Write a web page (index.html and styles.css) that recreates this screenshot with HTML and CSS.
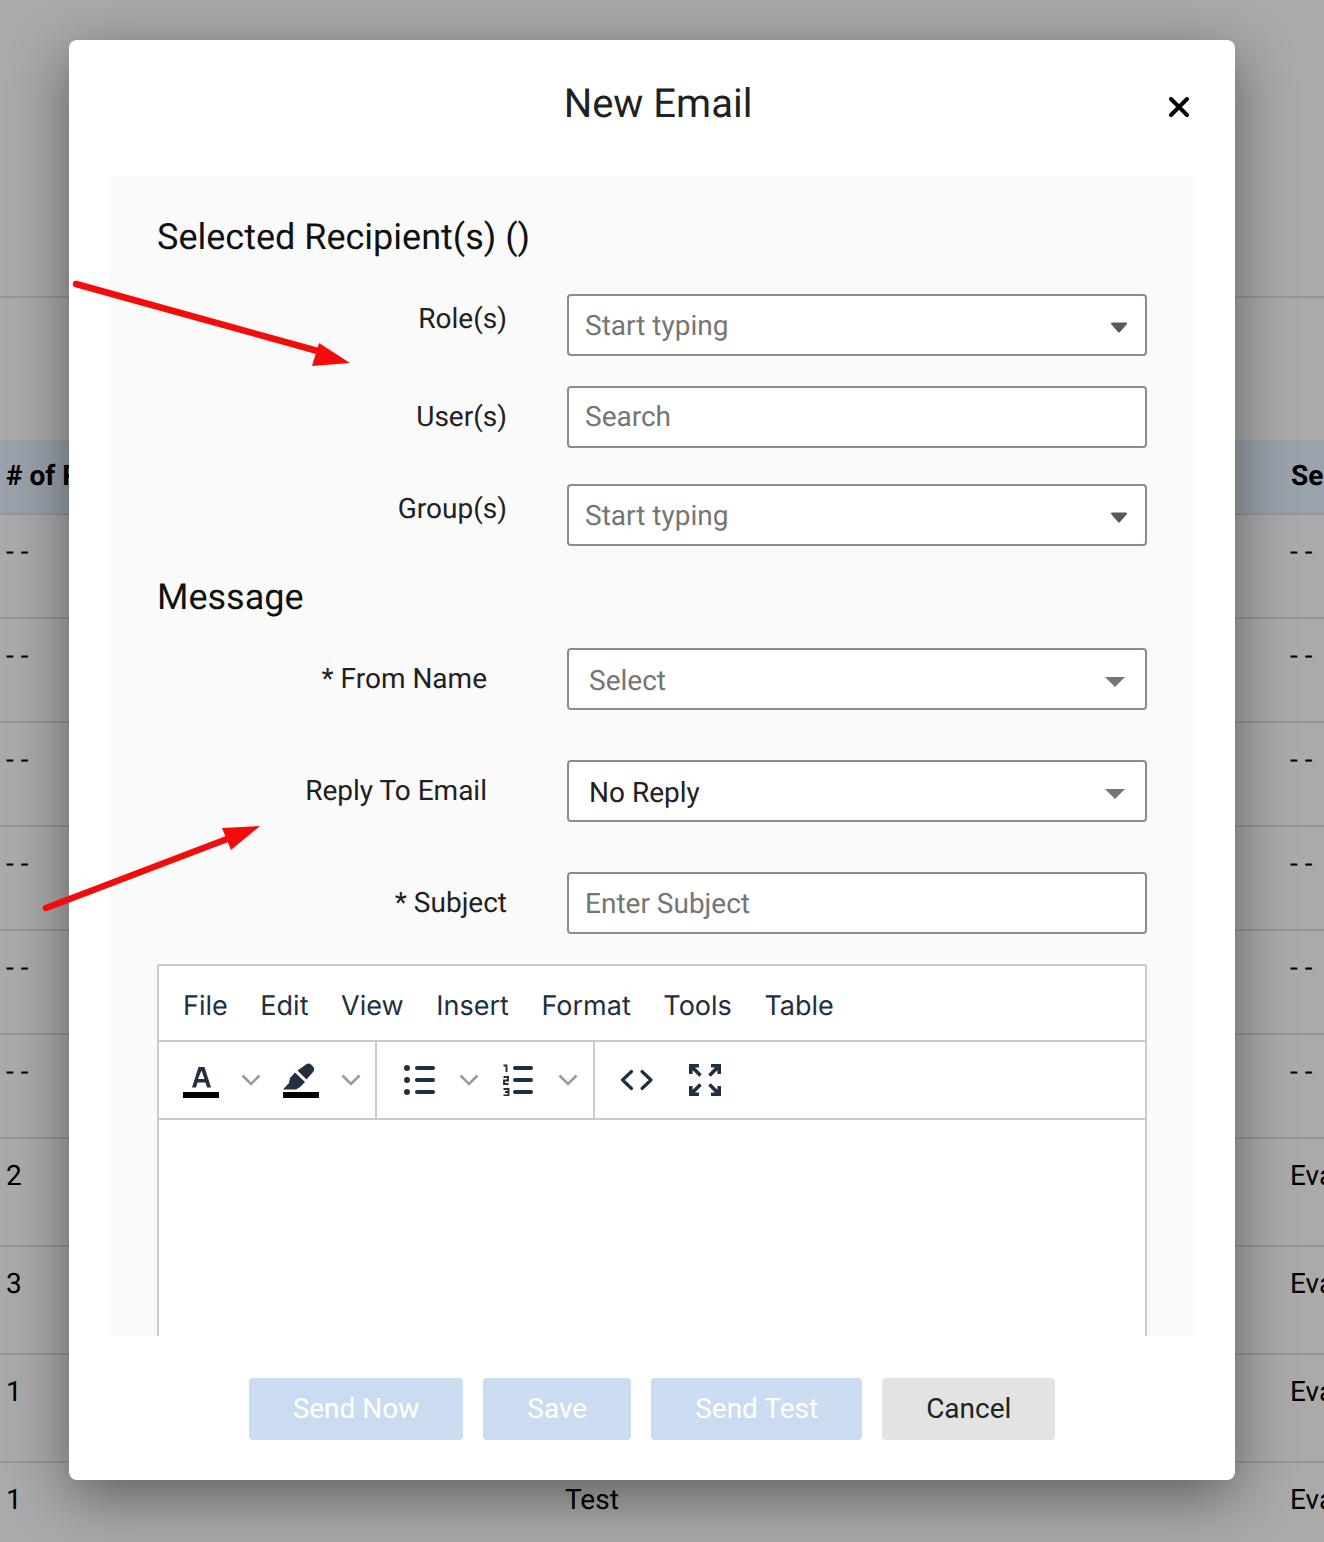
FILE: index.html
```html
<!DOCTYPE html>
<html lang="en">
<head>
<meta charset="utf-8">
<title>New Email</title>
<link rel="stylesheet" href="styles.css">
</head>
<body>
<main class="backdrop">
  <div class="bg-top"></div>
  <div class="bg-gap"></div>
  <div class="bg-row bg-head"><span class="c1"># of Recipients</span><span class="c2"></span><span class="c3">Sent By</span></div>
  <div class="bg-row"><span class="c1">- -</span><span class="c2"></span><span class="c3">- -</span></div>
  <div class="bg-row"><span class="c1">- -</span><span class="c2"></span><span class="c3">- -</span></div>
  <div class="bg-row"><span class="c1">- -</span><span class="c2"></span><span class="c3">- -</span></div>
  <div class="bg-row"><span class="c1">- -</span><span class="c2"></span><span class="c3">- -</span></div>
  <div class="bg-row"><span class="c1">- -</span><span class="c2"></span><span class="c3">- -</span></div>
  <div class="bg-row"><span class="c1">- -</span><span class="c2"></span><span class="c3">- -</span></div>
  <div class="bg-row tall"><span class="c1">2</span><span class="c2"></span><span class="c3">Evan</span></div>
  <div class="bg-row tall"><span class="c1">3</span><span class="c2"></span><span class="c3">Evan</span></div>
  <div class="bg-row tall"><span class="c1">1</span><span class="c2"></span><span class="c3">Evan</span></div>
  <div class="bg-row tall"><span class="c1">1</span><span class="c2">Test</span><span class="c3">Evan</span></div>
</main>

<section class="modal" aria-label="New Email">
  <header class="modal-head">
    <h1>New Email</h1>
    <button class="close" aria-label="Close">
      <svg viewBox="0 0 20 20" width="20" height="20"><path d="M2 2 18 18M18 2 2 18" fill="none" stroke="#000" stroke-width="4" stroke-linecap="round"/></svg>
    </button>
  </header>

  <div class="panel">
    <h2 class="h-recipients">Selected Recipient(s) ()</h2>

    <div class="row r-role">
      <label>Role(s)</label>
      <div class="field ph">Start typing<svg class="caret-small" width="18" height="11" viewBox="0 0 18 11"><path d="M2 1.500H16L9 9.500Z" fill="#595959" stroke="#595959" stroke-width="2" stroke-linejoin="round"/></svg></div>
    </div>
    <div class="row r-user">
      <label class="lbl-mid">User(s)</label>
      <div class="field ph search">Search</div>
    </div>
    <div class="row r-group">
      <label>Group(s)</label>
      <div class="field ph">Start typing<svg class="caret-small" width="18" height="11" viewBox="0 0 18 11"><path d="M2 1.500H16L9 9.500Z" fill="#595959" stroke="#595959" stroke-width="2" stroke-linejoin="round"/></svg></div>
    </div>

    <h2 class="h-message">Message</h2>

    <div class="row r-from">
      <label class="inset">* From Name</label>
      <div class="field ph wide">Select<i class="caret"></i></div>
    </div>
    <div class="row r-reply">
      <label class="inset">Reply To Email</label>
      <div class="field wide dark">No Reply<i class="caret"></i></div>
    </div>
    <div class="row r-subject">
      <label class="lbl-mid">* Subject</label>
      <div class="field ph">Enter Subject</div>
    </div>

    <div class="editor">
      <nav class="menubar">
        <span>File</span><span>Edit</span><span>View</span><span>Insert</span><span>Format</span><span>Tools</span><span>Table</span>
      </nav>
      <div class="toolbar">
        <div class="group g1">
          <svg class="ico" width="36" height="36" viewBox="0 0 36 36"><path d="M9 25.500 15.500 5h6L28 25.500h-4l-1.500-5h-8l-1.500 5Zm6-8.500h6.500L18.500 8.500Z" fill="#222f3e" fill-rule="evenodd"/><rect y="30" width="36" height="6" fill="#000"/></svg>
          <svg class="chev" width="20" height="12" viewBox="0 0 20 12"><path d="M1.500 1.500 10 10l8.500-8.500" fill="none" stroke="#959ba2" stroke-width="2.600"/></svg>
          <svg class="ico" width="36" height="36" viewBox="0 0 36 36"><g fill="#222f3e"><path d="M0 27.500 6 21l1-5 5-5.500L22 20l-5 5-4 2.500Z"/><path d="M14.500 8.500 23.500 17.500 30 10c1.500-1.500 1.500-4 0-5.500l-2-2c-1.500-1.500-3.500-1.500-5 0Z"/></g><rect y="30" width="36" height="6" fill="#000"/></svg>
          <svg class="chev" width="20" height="12" viewBox="0 0 20 12"><path d="M1.500 1.500 10 10l8.500-8.500" fill="none" stroke="#959ba2" stroke-width="2.600"/></svg>
        </div>
        <div class="group g2">
          <svg class="ico" width="32" height="32" viewBox="0 0 32 32"><g fill="#222f3e"><circle cx="3" cy="4" r="3"/><circle cx="3" cy="16" r="3"/><circle cx="3" cy="28" r="3"/><rect x="11" y="2" width="20" height="4" rx="2"/><rect x="11" y="14" width="20" height="4" rx="2"/><rect x="11" y="26" width="20" height="4" rx="2"/></g></svg>
          <svg class="chev" width="20" height="12" viewBox="0 0 20 12"><path d="M1.500 1.500 10 10l8.500-8.500" fill="none" stroke="#959ba2" stroke-width="2.600"/></svg>
          <svg class="ico" width="32" height="32" viewBox="0 0 32 32"><g fill="#222f3e"><rect x="10" y="2" width="20" height="4" rx="2"/><rect x="10" y="14" width="20" height="4" rx="2"/><rect x="10" y="26" width="20" height="4" rx="2"/></g><g fill="none" stroke="#222f3e" stroke-width="1.900"><path d="M.5 1.500H3.500V8"/><path d="M.5 13h4.500v3.500H1V20h4.500"/><path d="M.5 25h5v3H2M5.500 28v3.500H.5"/></g></svg>
          <svg class="chev" width="20" height="12" viewBox="0 0 20 12"><path d="M1.500 1.500 10 10l8.500-8.500" fill="none" stroke="#959ba2" stroke-width="2.600"/></svg>
        </div>
        <div class="group g3">
          <svg class="ico" width="34" height="22" viewBox="0 0 34 22"><path d="M11.500 2.500 2.500 11l9 8.500M22 2.500l9 8.500-9 8.500" fill="none" stroke="#222f3e" stroke-width="3.200" stroke-linecap="round" stroke-linejoin="round"/></svg>
          <svg class="ico" width="32" height="32" viewBox="0 0 32 32"><g fill="none" stroke="#222f3e" stroke-width="3.600"><path d="M1.800 10V1.800H10M2.500 2.500 11.500 11.500"/><path d="M30.200 10V1.800H22M29.500 2.500 20.500 11.500"/><path d="M1.800 22v8.200H10M2.500 29.500 11.500 20.500"/><path d="M30.200 22v8.200H22M29.500 29.500 20.500 20.500"/></g></svg>
        </div>
      </div>
      <div class="edit-area"></div>
    </div>
  </div>

  <footer class="modal-foot">
    <button class="btn primary w-now">Send Now</button>
    <button class="btn primary w-save">Save</button>
    <button class="btn primary w-test">Send Test</button>
    <button class="btn cancel">Cancel</button>
  </footer>
</section>

<svg class="arrows" width="1324" height="1542" viewBox="0 0 1324 1542" aria-hidden="true">
  <path d="M76 284 325 353" stroke="#f40b0b" stroke-width="6.500" stroke-linecap="round" fill="none"/>
  <path d="M350 363 319 343 312 366Z" fill="#f40b0b"/>
  <path d="M46 908 235 836" stroke="#f40b0b" stroke-width="6.500" stroke-linecap="round" fill="none"/>
  <path d="M260 826 222 828 231 850Z" fill="#f40b0b"/>
</svg>
</body>
</html>
```
FILE: styles.css
```css
* { box-sizing: border-box; }
html, body { margin: 0; padding: 0; }
body {
  width: 1324px;
  height: 1542px;
  overflow: hidden;
  position: relative;
  background: #aaaaaa;
  font-family: Roboto, "Liberation Sans", sans-serif;
  text-rendering: geometricPrecision;
  color: #000;
}

/* dimmed table behind the modal */
.backdrop { height: 1542px; overflow: hidden; }
.bg-top { height: 298px; border-bottom: 2px solid #969696; }
.bg-gap { height: 142px; }
.bg-row {
  height: 104px;
  border-bottom: 2px solid #969696;
  display: grid;
  grid-template-columns: 559px 725px 1fr;
  padding-left: 6px;
  font-size: 28px;
  line-height: 32px;
  padding-top: 21px;
  color: #000;
  white-space: nowrap;
  overflow: hidden;
}
.bg-row.tall { height: 108px; padding-top: 21px; }
.bg-head {
  height: 75px;
  background: #9aa2ab;
  font-weight: 700;
  padding-top: 20px;
}
.bg-head .c3 { padding-left: 1px; }
.c1 { display: block; }

/* modal */
.modal {
  position: absolute;
  left: 69px;
  top: 40px;
  width: 1166px;
  height: 1440px;
  background: #fff;
  border-radius: 8px;
  box-shadow: 0 16px 60px rgba(0, 0, 0, .45);
  display: flex;
  flex-direction: column;
}
.modal-head {
  height: 136px;
  position: relative;
  text-align: center;
}
.modal-head h1 {
  margin: 0;
  padding: 39px 0 0 12px;
  font-size: 40px;
  line-height: 50px;
  font-weight: 400;
  color: #212121;
}
.close {
  position: absolute;
  left: 1098px;
  top: 55px;
  width: 24px;
  height: 24px;
  padding: 2px;
  border: 0;
  background: none;
  display: flex;
}
.panel {
  margin: 0 40px;
  height: 1160px;
  background: #fafafa;
  overflow: hidden;
  padding: 0 48px;
}
h2 {
  margin: 0;
  font-size: 36px;
  line-height: 44px;
  font-weight: 400;
  color: #111;
}
.h-recipients { margin-top: 39px; }
.h-message { margin-top: 29px; }

.row {
  display: flex;
  gap: 60px;
  margin-top: 30px;
}
.row label {
  width: 350px;
  text-align: right;
  font-size: 28px;
  line-height: 32px;
  padding-top: 9px;
  color: #212121;
}
.row label.lbl-mid { padding-top: 15px; }
.row label.inset { padding-right: 20px; padding-top: 15px; }

.r-role { margin-top: 35px; }
.r-group { margin-top: 36px; }
.r-from { margin-top: 29px; }
.r-reply { margin-top: 50px; }
.r-subject { margin-top: 50px; }

.field {
  width: 580px;
  height: 62px;
  background: #fff;
  border: 2px solid #8c8c8c;
  border-radius: 4px;
  padding: 0 16px;
  font-size: 28px;
  line-height: 60px;
  position: relative;
}
.field.search { line-height: 58px; }
.field.wide { padding-left: 20px; line-height: 62px; }
.ph { color: #757575; }
.dark { color: #212121; }
.caret {
  position: absolute;
  right: 20px;
  top: 27px;
  width: 0;
  height: 0;
  border: 10px solid transparent;
  border-top: 10px solid #757575;
  border-bottom: 0;
}
.caret-small {
  position: absolute;
  right: 17px;
  top: 26px;
  display: block;
}

/* editor */
.editor {
  margin-top: 30px;
  width: 990px;
  height: 400px;
  border: 2px solid #cccccc;
  border-bottom: 0;
  border-radius: 2px 2px 0 0;
  background: #fff;
}
.menubar {
  height: 76px;
  border-bottom: 2px solid #cccccc;
  display: flex;
  align-items: center;
  gap: 32.6px;
  padding: 4px 0 0 24px;
  font-family: Inter, Roboto, sans-serif;
  font-size: 27px;
  color: #222f3e;
}
.toolbar {
  height: 78px;
  border-bottom: 2px solid #cccccc;
  display: flex;
}
.group {
  display: flex;
  align-items: center;
  height: 76px;
  border-right: 2px solid #cccccc;
}
.g1 { width: 218px; padding-left: 24px; }
.g2 { width: 218px; padding-left: 27px; }
.g3 { border-right: 0; padding-left: 25px; gap: 35px; }
.chev { margin: 0 0 0 22px; flex: none; }
.g1 .chev + .ico { margin-left: 22px; }
.g2 .chev + .ico { margin-left: 24px; }
.g2 .chev { margin-left: 23px; }
.ico { flex: none; display: block; }

/* footer */
.modal-foot {
  flex: 1;
  display: flex;
  justify-content: center;
  gap: 20px;
  padding-top: 42px;
}
.btn {
  height: 62px;
  border: 0;
  border-radius: 4px;
  font-family: inherit;
  font-size: 28px;
  padding: 0 44px 2px;
}
.primary { background: #cbdcf1; color: #fff; }
.cancel { background: #e3e3e3; color: #212121; }

/* annotation arrows over the screenshot */
.arrows {
  position: absolute;
  left: 0;
  top: 0;
  pointer-events: none;
}
```
